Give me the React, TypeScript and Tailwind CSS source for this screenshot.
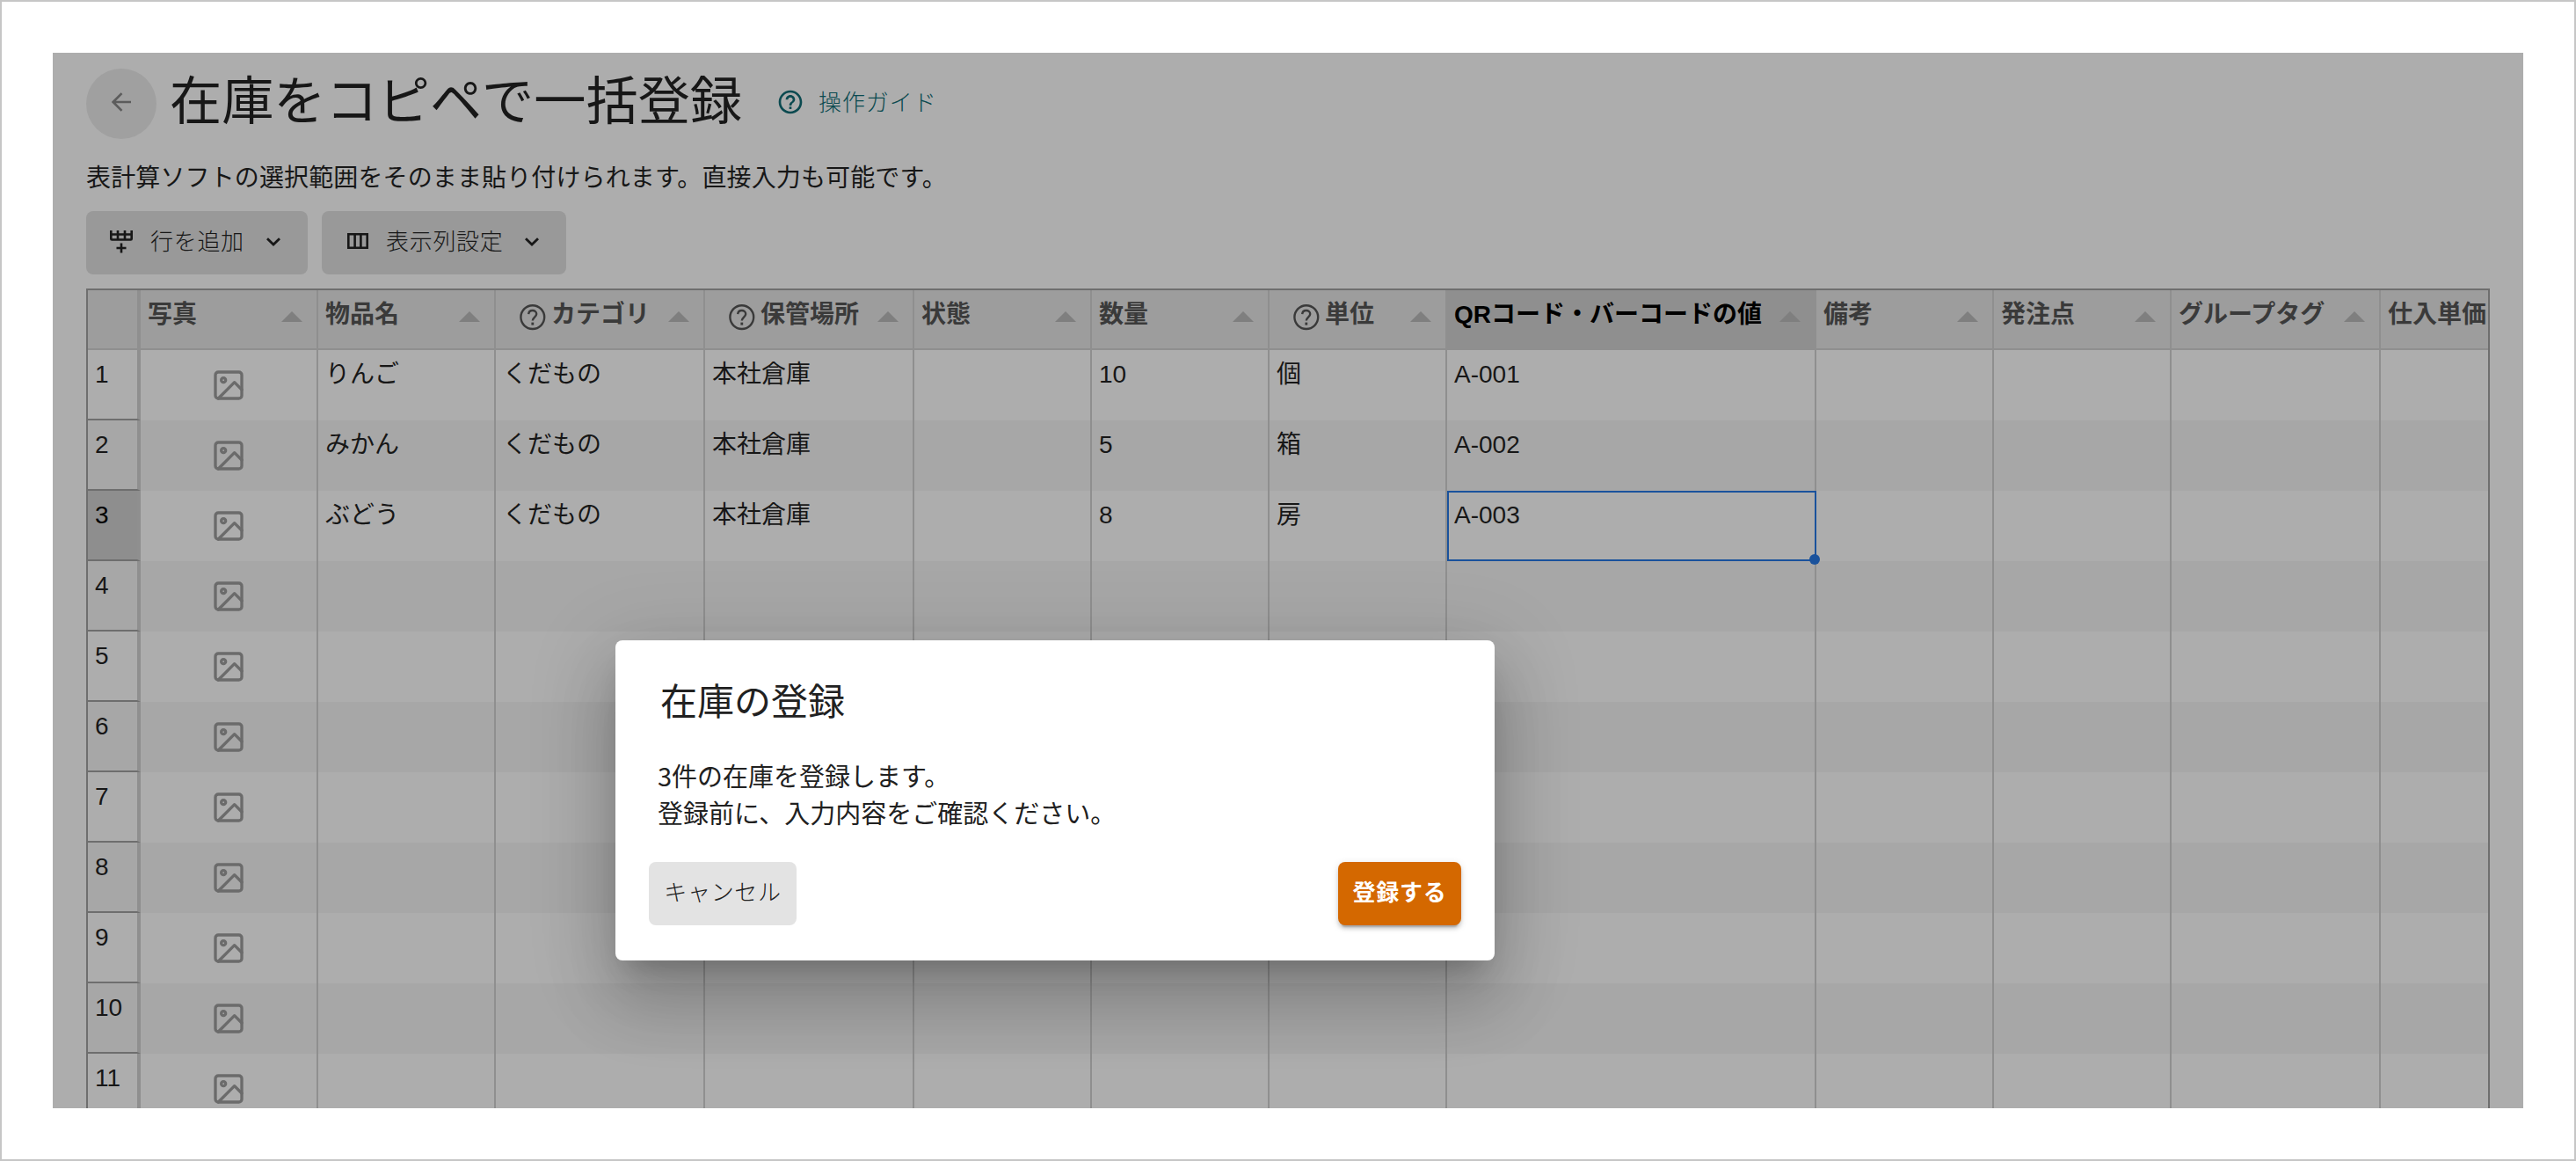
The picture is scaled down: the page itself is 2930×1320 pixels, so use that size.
import React from 'react'
import { FiImage } from 'react-icons/fi'

interface Column {
  title: string
  width: string
  help?: boolean
  active?: boolean
  noSort?: boolean
}

const columns: Column[] = [
  { title: '写真', width: 'w-[202px]' },
  { title: '物品名', width: 'w-[202px]' },
  { title: 'カテゴリ', width: 'w-[238px]', help: true },
  { title: '保管場所', width: 'w-[238px]', help: true },
  { title: '状態', width: 'w-[202px]' },
  { title: '数量', width: 'w-[202px]' },
  { title: '単位', width: 'w-[202px]', help: true },
  { title: 'QRコード・バーコードの値', width: 'w-[420px]', active: true },
  { title: '備考', width: 'w-[202px]' },
  { title: '発注点', width: 'w-[202px]' },
  { title: 'グループタグ', width: 'w-[238px]' },
  { title: '仕入単価', width: 'w-[122px]', noSort: true },
]

const items: string[][] = [
  ['', 'りんご', 'くだもの', '本社倉庫', '', '10', '個', 'A-001'],
  ['', 'みかん', 'くだもの', '本社倉庫', '', '5', '箱', 'A-002'],
  ['', 'ぶどう', 'くだもの', '本社倉庫', '', '8', '房', 'A-003'],
]

const rows = Array.from({ length: 11 }, (_, i) => items[i] ?? [])
const selected = { row: 2, col: 7 }

const HelpIcon: React.FC<{ className?: string }> = ({ className }) => (
  <svg viewBox="0 0 24 24" fill="currentColor" className={className}>
    <path d="M11 18h2v-2h-2v2zm1-16C6.480 2 2 6.480 2 12s4.480 10 10 10 10-4.480 10-10S17.520 2 12 2zm0 18c-4.410 0-8-3.590-8-8s3.590-8 8-8 8 3.590 8 8-3.590 8-8 8zm0-14c-2.210 0-4 1.790-4 4h2c0-1.100.9-2 2-2s2 .9 2 2c0 2-3 1.750-3 5h2c0-2.250 3-2.500 3-5 0-2.210-1.790-4-4-4z" />
  </svg>
)

const HelpThinIcon: React.FC = () => (
  <svg viewBox="0 0 36 36" fill="none" stroke="currentColor" strokeWidth="2.4" className="size-9">
    <circle cx="17.800" cy="17.600" r="13.400" />
    <path d="M13.200 14.200c.2-2.600 2-4.200 4.500-4.200s4.500 1.600 4.500 4c0 3.400-4.400 3.900-4.400 7.600" />
    <path d="M17.800 23.600v3" strokeWidth="2.8" />
  </svg>
)

const ChevronIcon: React.FC = () => (
  <svg viewBox="0 0 16 10" fill="none" stroke="currentColor" strokeWidth="2.8" className="mb-[3px] h-2.5 w-4">
    <path d="M1 1.200 8 8 15 1.200" />
  </svg>
)

const AddRowIcon: React.FC = () => (
  <svg viewBox="0 0 28 26" fill="none" stroke="currentColor" strokeWidth="2.6" className="mb-[3px] h-[26px] w-7">
    <path d="M2.300 0v9.500q0 1 1 1h21.400q1 0 1-1V0M2 4.500h24M10 0v10.500M18 0v10.500M14 14.500v11M8.500 20h11" />
  </svg>
)

const ColumnsIcon: React.FC = () => (
  <svg viewBox="0 0 24 18" fill="none" stroke="currentColor" strokeWidth="2.6" className="mb-[5px] h-[18px] w-6">
    <path d="M1.300 1.300h21.400v15.400H1.300zM8.600 1v16M15.400 1v16" />
  </svg>
)

const Header: React.FC = () => (
  <div className="flex h-[68px] border-b-2 border-[#8f8f8f] bg-[#9d9d9d]">
    <div className="w-[60px] shrink-0 border-r-4 border-[#8f8f8f]" />
    {columns.map(c => (
      <div
        key={c.title}
        className={`${c.width} flex shrink-0 justify-between border-r-2 border-[#8f8f8f] pr-4 pl-2 font-bold last:border-r-0 last:pr-0 ${c.active ? 'bg-[#8f8f8f] text-black' : 'text-[#3a3a3a]'}`}
      >
        <div className="flex whitespace-nowrap">
          {c.help && <div className="mt-[13px] mr-[3px] ml-4"><HelpThinIcon /></div>}
          <span className="pt-[7px] leading-[42px]">{c.title}</span>
        </div>
        {!c.noSort && (
          <svg viewBox="0 0 24 12" className="mt-6 h-3 w-6 shrink-0"><path d="M12 0 24 12H0z" fill="#7f7f7f" /></svg>
        )}
      </div>
    ))}
  </div>
)

const Row: React.FC<{ index: number; cells: string[] }> = ({ index, cells }) => (
  <div className={`flex h-20 shrink-0 ${index % 2 ? 'bg-[#a7a7a7]' : 'bg-[#adadad]'}`}>
    <div
      className={`w-[60px] shrink-0 border-r-4 border-b-2 border-r-[#8f8f8f] border-b-[#6e6e6e] pt-[7px] pl-2 leading-[42px] ${index === selected.row ? 'bg-[#8e8e8e] text-black' : ''}`}
    >
      {index + 1}
    </div>
    {columns.map((c, i) => (
      <div key={c.title} className={`${c.width} relative shrink-0 border-r-2 border-[#8f8f8f] pt-[7px] pl-2 leading-[42px] last:border-r-0`}>
        {i === 0 ? (
          <div className="flex h-[66px] items-center justify-center pr-2">
            <FiImage className="size-10 text-[#6b6b6b]" />
          </div>
        ) : cells[i]}
        {index === selected.row && i === selected.col && (
          <div className="absolute inset-y-0 left-0 -right-0.5 z-10 border-2 border-[#1a529c]">
            <div className="absolute -right-1.5 -bottom-1.5 size-3 rounded-full bg-[#1a529c]" />
          </div>
        )}
      </div>
    ))}
  </div>
)

const ConfirmDialog: React.FC = () => (
  <div className="absolute top-[726px] left-[698px] z-20 flex h-[364px] w-[1000px] flex-col rounded-lg bg-white px-[38px] pt-[37px] pb-10 text-[#212121] shadow-[0_22px_30px_-14px_rgba(0,0,0,0.2),0_48px_76px_6px_rgba(0,0,0,0.14),0_18px_92px_16px_rgba(0,0,0,0.12)]">
    <h2 className="pl-[13px] text-[42px] leading-[60px]">在庫の登録</h2>
    <p className="mt-[35px] pl-2.5 text-[29px] leading-[42px]">
      3件の在庫を登録します。<br />登録前に、入力内容をご確認ください。
    </p>
    <div className="mt-auto flex justify-between text-[26px] leading-[66px] tracking-[0.7px]">
      <button className="h-[72px] w-[168px] rounded-lg bg-[#e3e3e3] pb-1.5 font-light">キャンセル</button>
      <button className="h-[72px] w-[140px] rounded-lg bg-[#d46800] pb-1.5 font-bold text-white shadow-[0_6px_2px_-4px_rgba(0,0,0,0.2),0_4px_4px_0_rgba(0,0,0,0.14),0_2px_10px_0_rgba(0,0,0,0.12)]">登録する</button>
    </div>
  </div>
)

const App: React.FC = () => (
  <div className="relative h-[1320px] w-[2930px] border-2 border-[#c6c6c6] bg-white p-[58px] font-['Noto_Sans_CJK_JP',sans-serif] text-[#171717]">
    <div className="flex h-[1200px] w-[2810px] flex-col overflow-hidden bg-[#adadad] px-[38px] pt-[18px]">
      <div className="flex h-20 shrink-0 items-center">
        <div className="flex size-20 items-center justify-center rounded-full bg-[#a0a0a0] pb-1">
          <svg viewBox="0 0 22 22" fill="none" stroke="#5c5c5c" strokeWidth="2.6" className="size-[22px]">
            <path d="M22 11H2M11.500 1.200 1.700 11l9.800 9.800" />
          </svg>
        </div>
        <h1 className="ml-[15px] pb-3.5 text-[59.2px] leading-none">在庫をコピペで一括登録</h1>
        <div className="ml-[39px] flex items-center gap-4 pb-1 text-[26px] font-light tracking-[0.9px] text-[#0b4a50]">
          <HelpIcon className="size-8" />
          <span className="pb-[3px]">操作ガイド</span>
        </div>
      </div>

      <p className="mt-[21px] h-[43px] text-[28px] leading-[42px] tracking-[0.13px]">表計算ソフトの選択範囲をそのまま貼り付けられます。直接入力も可能です。</p>

      <div className="mt-[18px] flex shrink-0 gap-4 text-[26px] leading-[66px] font-light tracking-[0.7px]">
        <button className="flex h-[72px] w-[252px] items-center rounded-lg bg-[#999] pl-[26px]">
          <AddRowIcon />
          <span className="mr-[25px] ml-[19px] h-[72px]">行を追加</span>
          <ChevronIcon />
        </button>
        <button className="flex h-[72px] w-[278px] items-center rounded-lg bg-[#999] pl-[29px]">
          <ColumnsIcon />
          <span className="mr-[24px] ml-[20px] h-[72px]">表示列設定</span>
          <ChevronIcon />
        </button>
      </div>

      <div className="mt-4 w-[2734px] flex-1 overflow-hidden border-2 border-b-0 border-[#6e6e6e] font-['Liberation_Sans','Noto_Sans_CJK_JP',sans-serif] text-[28px]">
        <Header />
        {rows.map((cells, i) => <Row key={i} index={i} cells={cells} />)}
      </div>
    </div>
    <ConfirmDialog />
  </div>
)

export default App
